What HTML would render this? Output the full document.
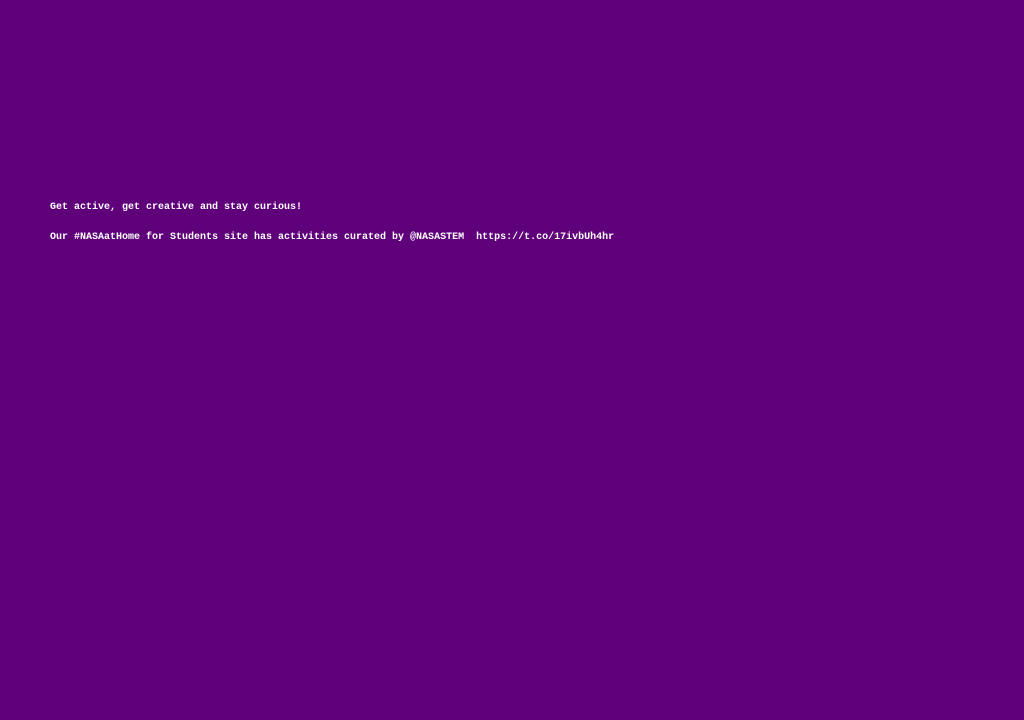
<!DOCTYPE html>
<html><head><meta charset="utf-8"><style>
html,body{margin:0;padding:0;width:1024px;height:720px;background:#5f007a;overflow:hidden}
p{position:absolute;left:50px;margin:0;color:#fff;font:bold 10px/12px "Liberation Mono",monospace;white-space:pre}
</style></head><body>
<p style="top:202px">Get active, get creative and stay curious!</p>
<p style="top:232px">Our #NASAatHome for Students site has activities curated by @NASASTEM  https://t.co/17ivbUh4hr</p>
</body></html>
